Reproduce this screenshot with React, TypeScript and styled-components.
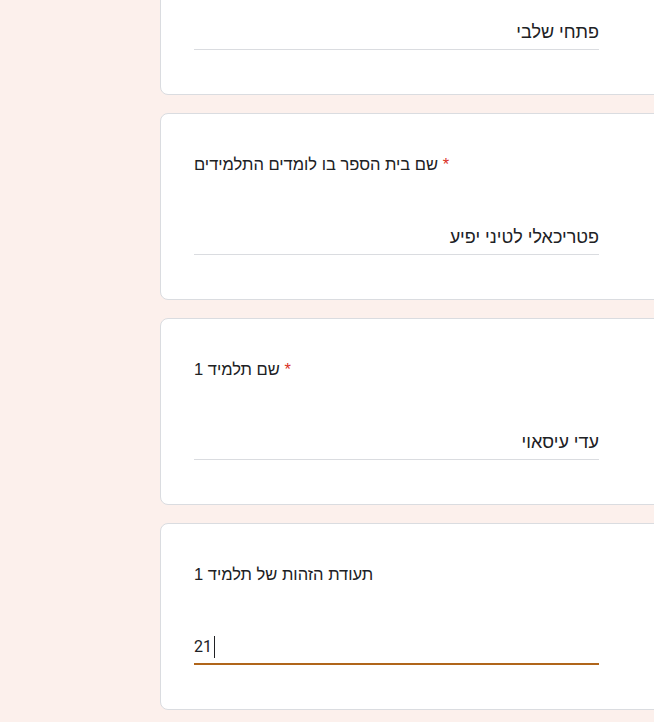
import styled, { createGlobalStyle } from "styled-components";

const GlobalStyle = createGlobalStyle`
  html, body {
    margin: 0;
    padding: 0;
    background: #fcf0ec;
    overflow: hidden;
  }
  body {
    font-family: "Liberation Sans", Arial, "DejaVu Sans", sans-serif;
    color: #202124;
  }
`;

const Page = styled.div`
  display: flex;
  flex-direction: column;
  gap: 18px;
  margin-top: -92px;
  padding-left: 160px;
  width: 900px;
`;

const Card = styled.div`
  width: 720px;
  box-sizing: border-box;
  background: #ffffff;
  border: 1px solid #dadce0;
  border-radius: 8px;
  padding: 38px 0 44px 33px;
`;

const Title = styled.div`
  direction: ltr;
  text-align: left;
  font-size: 16.5px;
  line-height: 24px;
  color: #202124;
`;

const Required = styled.span`
  color: #d93025;
`;

const Field = styled.div<{ $focused?: boolean; $ltr?: boolean }>`
  margin-top: 49px;
  width: 405px;
  box-sizing: border-box;
  direction: ${(p) => (p.$ltr ? "ltr" : "rtl")};
  text-align: ${(p) => (p.$ltr ? "left" : "right")};
  font-family: ${(p) => (p.$ltr ? "Roboto, " : "")}"Liberation Sans", Arial, sans-serif;
  font-size: ${(p) => (p.$ltr ? "16px" : "18px")};
  line-height: 24px;
  color: #202124;
  padding-bottom: ${(p) => (p.$focused ? "4px" : "5px")};
  border-bottom: ${(p) => (p.$focused ? "2px solid #b0651a" : "1px solid #dadce0")};
  display: flex;
  align-items: center;
`;

const Caret = styled.span`
  display: inline-block;
  width: 1px;
  height: 22px;
  margin-left: 2px;
  background: #202124;
`;

type Question = {
  title: string;
  required: boolean;
  answer: string;
  focused?: boolean;
  ltr?: boolean;
};

const questions: Question[] = [
  { title: "שם המורה", required: true, answer: "פתחי שלבי" },
  { title: "שם בית הספר בו לומדים התלמידים", required: true, answer: "פטריכאלי לטיני יפיע" },
  { title: "שם תלמיד 1", required: true, answer: "עדי עיסאוי" },
  { title: "תעודת הזהות של תלמיד 1", required: false, answer: "21", focused: true, ltr: true },
];

const App = () => {
  return (
    <>
      <GlobalStyle />
      <Page>
        {questions.map((q) => (
          <Card key={q.title}>
            <Title>
              {q.title}
              {q.required && <Required> *</Required>}
            </Title>
            <Field $focused={q.focused} $ltr={q.ltr}>
              <span>{q.answer}</span>
              {q.focused && <Caret />}
            </Field>
          </Card>
        ))}
      </Page>
    </>
  );
};

export default App;
